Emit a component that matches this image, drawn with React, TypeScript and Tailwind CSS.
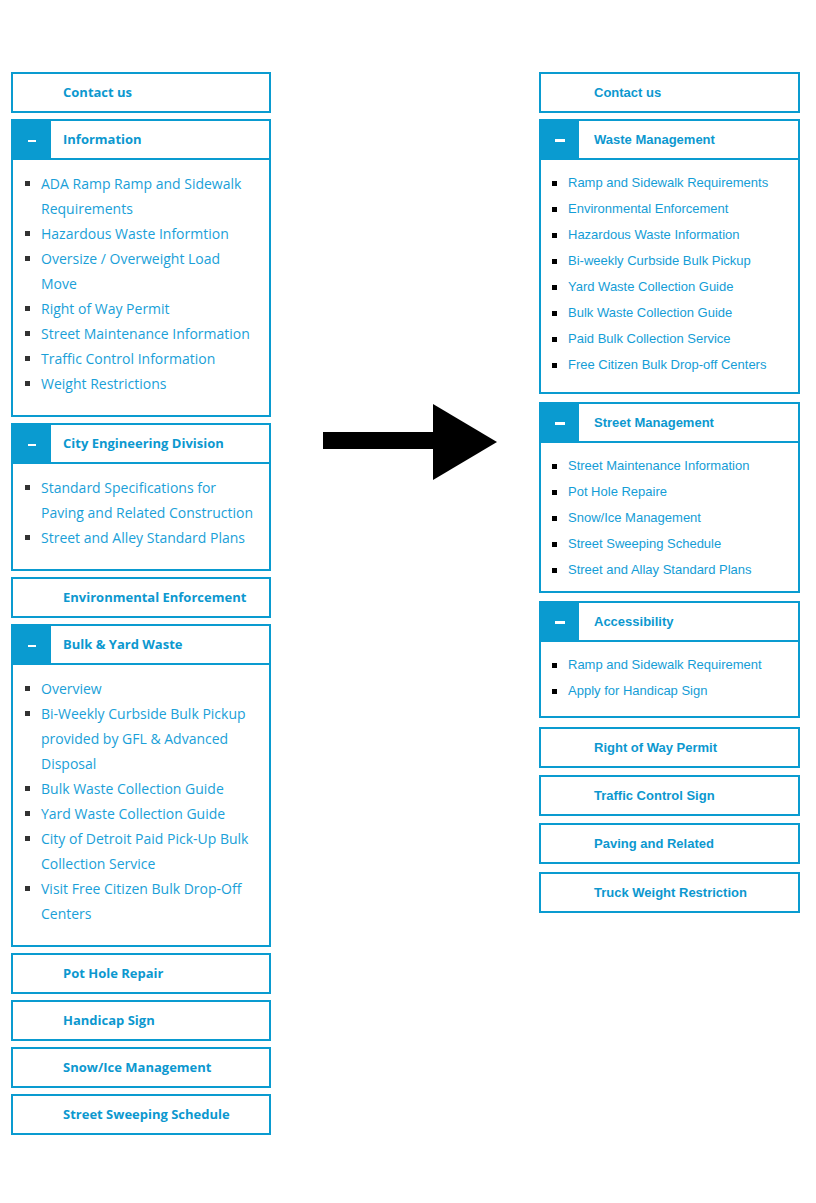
type Section = { title: string; items?: string[] }

const before: Section[] = [
  { title: 'Contact us' },
  {
    title: 'Information',
    items: [
      'ADA Ramp Ramp and Sidewalk Requirements',
      'Hazardous Waste Informtion',
      'Oversize / Overweight Load Move',
      'Right of Way Permit',
      'Street Maintenance Information',
      'Traffic Control Information',
      'Weight Restrictions',
    ],
  },
  {
    title: 'City Engineering Division',
    items: ['Standard Specifications for Paving and Related Construction', 'Street and Alley Standard Plans'],
  },
  { title: 'Environmental Enforcement' },
  {
    title: 'Bulk & Yard Waste',
    items: [
      'Overview',
      'Bi-Weekly Curbside Bulk Pickup provided by GFL & Advanced Disposal',
      'Bulk Waste Collection Guide',
      'Yard Waste Collection Guide',
      'City of Detroit Paid Pick-Up Bulk Collection Service',
      'Visit Free Citizen Bulk Drop-Off Centers',
    ],
  },
  { title: 'Pot Hole Repair' },
  { title: 'Handicap Sign' },
  { title: 'Snow/Ice Management' },
  { title: 'Street Sweeping Schedule' },
]

// right column boxes don't sit on an even gap, so each carries its own top margin
const after: (Section & { mt: string; pb: string })[] = [
  { title: 'Contact us', mt: 'mt-0', pb: 'pb-0' },
  {
    title: 'Waste Management',
    mt: 'mt-[6px]',
    pb: 'pb-[14px]',
    items: [
      'Ramp and Sidewalk Requirements',
      'Environmental Enforcement',
      'Hazardous Waste Information',
      'Bi-weekly Curbside Bulk Pickup',
      'Yard Waste Collection Guide',
      'Bulk Waste Collection Guide',
      'Paid Bulk Collection Service',
      'Free Citizen Bulk Drop-off Centers',
    ],
  },
  {
    title: 'Street Management',
    mt: 'mt-[8px]',
    pb: 'pb-[8px]',
    items: [
      'Street Maintenance Information',
      'Pot Hole Repaire',
      'Snow/Ice Management',
      'Street Sweeping Schedule',
      'Street and Allay Standard Plans',
    ],
  },
  {
    title: 'Accessibility',
    mt: 'mt-[8px]',
    pb: 'pb-[12px]',
    items: ['Ramp and Sidewalk Requirement', 'Apply for Handicap Sign'],
  },
  { title: 'Right of Way Permit', mt: 'mt-[9px]', pb: 'pb-0' },
  { title: 'Traffic Control Sign', mt: 'mt-[7px]', pb: 'pb-0' },
  { title: 'Paving and Related', mt: 'mt-[7px]', pb: 'pb-0' },
  { title: 'Truck Weight Restriction', mt: 'mt-[8px]', pb: 'pb-0' },
]

function OldBox({ section }: { section: Section }) {
  const open = !!section.items
  return (
    <div className="border-2 border-[#0a9bd0] bg-white">
      <div className={`flex items-stretch ${open ? 'h-[39px] border-b-2 border-[#0a9bd0]' : 'h-[37px]'}`}>
        <div className={`w-[38px] shrink-0 flex items-center justify-center ${open ? 'bg-[#0a9bd0] -mb-[2px]' : ''}`}>
          {open && <span className="block w-[8px] h-[2px] bg-white" />}
        </div>
        <div className="flex items-center pl-[12px] text-[13px] font-bold text-[#0c98cf]">{section.title}</div>
      </div>
      {open && (
        <ul className="pt-[11px] pb-[19px] pl-[12px] pr-[10px]">
          {section.items!.map((item) => (
            <li key={item} className="flex items-start text-[14px] leading-[25px] text-[#1a9fd8]">
              <span className="h-[25px] w-[5px] shrink-0 flex items-center">
                <span className="block w-[5px] h-[5px] bg-[#333]" />
              </span>
              <span className="ml-[11px]">{item}</span>
            </li>
          ))}
        </ul>
      )}
    </div>
  )
}

function NewBox({ section }: { section: Section & { mt: string; pb: string } }) {
  const open = !!section.items
  return (
    <div className={`border-2 border-[#0a9bd0] bg-white ${section.mt}`}>
      <div className={`flex items-stretch ${open ? 'h-[39px] border-b-2 border-[#0a9bd0]' : 'h-[37px]'}`}>
        <div className={`w-[38px] shrink-0 flex items-center justify-center ${open ? 'bg-[#0a9bd0] -mb-[2px]' : ''}`}>
          {open && <span className="block w-[10px] h-[3px] bg-white" />}
        </div>
        <div className="flex items-center pl-[15px] text-[13px] font-bold text-[#0c98cf]">{section.title}</div>
      </div>
      {open && (
        <ul className={`pt-[10px] pl-[11px] pr-[8px] ${section.pb}`}>
          {section.items!.map((item) => (
            <li key={item} className="flex items-center h-[26px] text-[13px] text-[#149dd6]">
              <span className="block w-[5px] h-[5px] bg-black shrink-0" />
              <span className="ml-[11px]">{item}</span>
            </li>
          ))}
        </ul>
      )}
    </div>
  )
}

export default function App() {
  return (
    <div className="min-h-[1203px] w-[816px] bg-white flex items-start pt-[72px] pl-[11px]">
      <div className="w-[260px] flex flex-col gap-[6px] font-['Open_Sans',sans-serif]">
        {before.map((s) => (
          <OldBox key={s.title} section={s} />
        ))}
      </div>

      <svg width="174" height="76" viewBox="0 0 174 76" className="ml-[52px] mt-[332px] shrink-0">
        <rect x="0" y="28" width="112" height="17" fill="#000" />
        <polygon points="110,0 174,38 110,76" fill="#000" />
      </svg>

      <div className="w-[261px] ml-[42px] flex flex-col font-['Liberation_Sans',Arial,sans-serif]">
        {after.map((s) => (
          <NewBox key={s.title} section={s} />
        ))}
      </div>
    </div>
  )
}
